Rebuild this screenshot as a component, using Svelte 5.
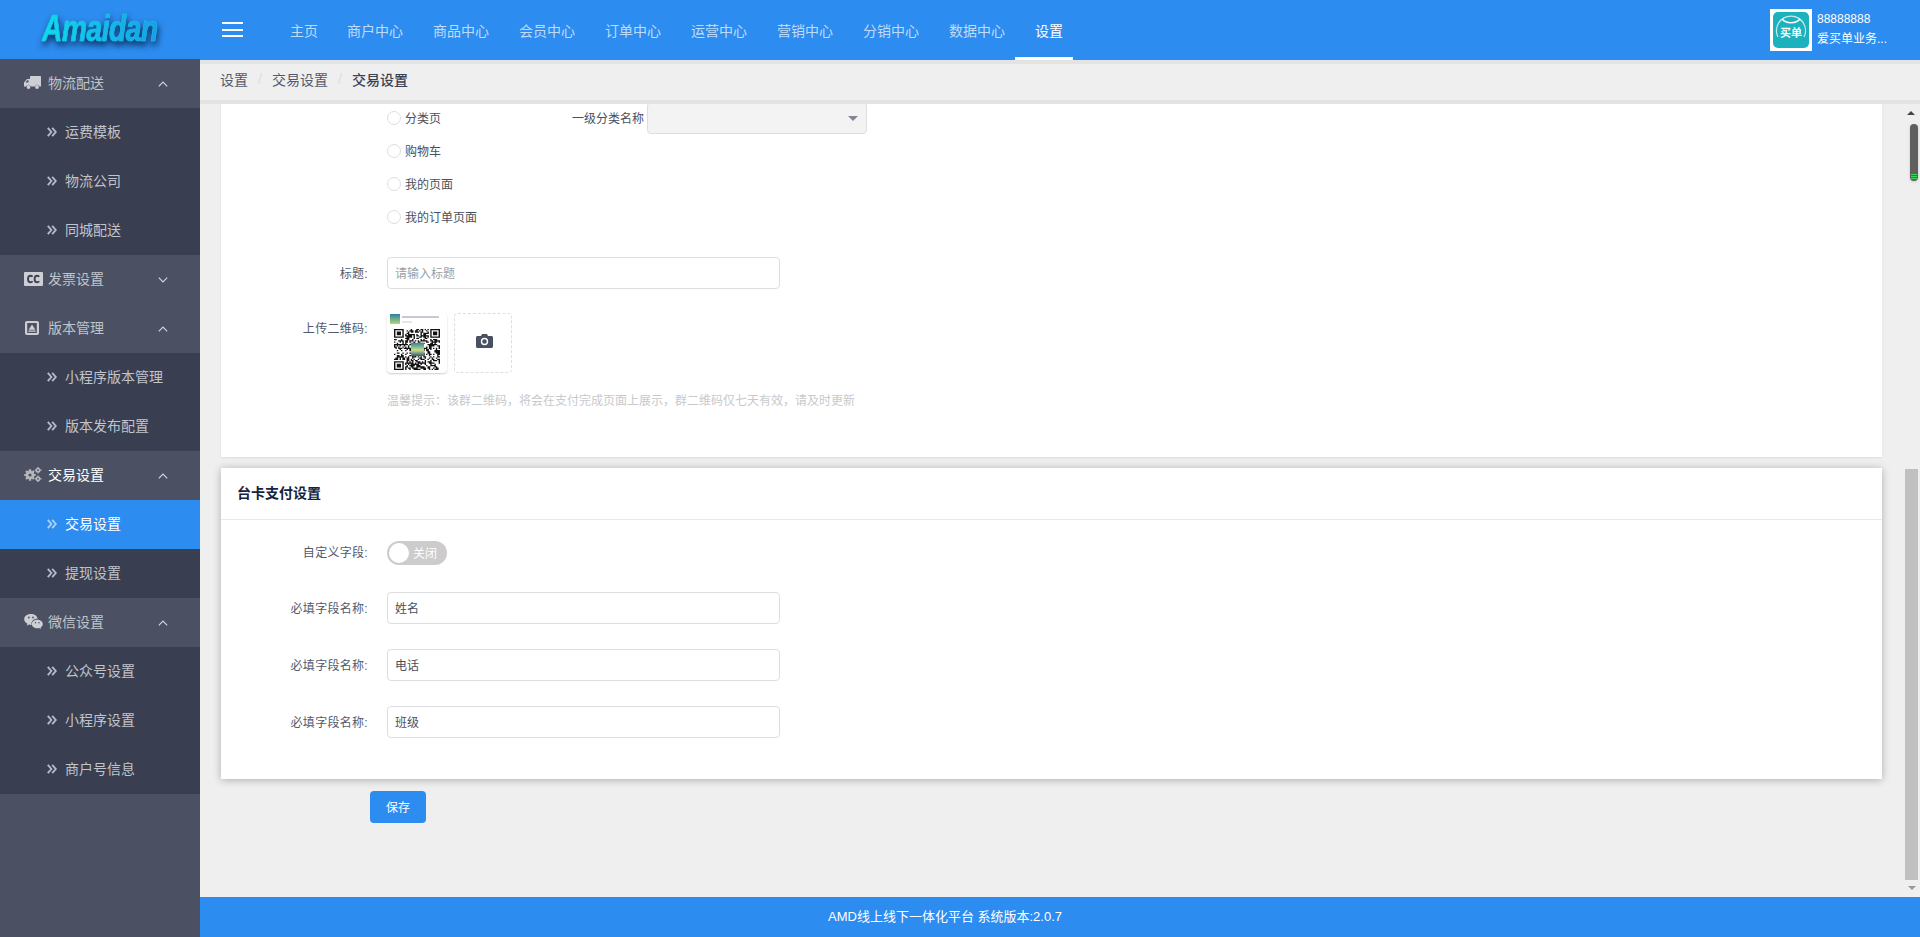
<script>
  const nav = ['主页', '商户中心', '商品中心', '会员中心', '订单中心', '运营中心', '营销中心', '分销中心', '数据中心', '设置']

  const menu = [
    { icon: 'truck', label: '物流配送', open: true, subs: ['运费模板', '物流公司', '同城配送'] },
    { icon: 'cc', label: '发票设置', open: false, subs: [] },
    { icon: 'version', label: '版本管理', open: true, subs: ['小程序版本管理', '版本发布配置'] },
    { icon: 'gears', label: '交易设置', open: true, current: true, subs: ['交易设置', '提现设置'] },
    { icon: 'wechat', label: '微信设置', open: true, subs: ['公众号设置', '小程序设置', '商户号信息'] }
  ]

  const pages = ['分类页', '购物车', '我的页面', '我的订单页面']
  const required = ['姓名', '电话', '班级']
  // full-width punctuation, same as the original page
  const hint = '温馨提示\uFF1A该群二维码\uFF0C将会在支付完成页面上展示\uFF0C群二维码仅七天有效\uFF0C请及时更新'

  // fake qr modules, just needs to look like one
  function qrPath(size) {
    let seed = 20771
    let d = ''
    const finder = (x, y) => x < 8 && y < 8
    for (let y = 0; y < size; y++) {
      for (let x = 0; x < size; x++) {
        seed = (seed * 1103515245 + 12345) & 0x7fffffff
        const inCorner = finder(x, y) || finder(size - 1 - x, y) || finder(x, size - 1 - y)
        if (!inCorner && (seed >> 16) % 2 === 0) d += `M${x} ${y}h1v1h-1z`
      }
    }
    for (const [cx, cy] of [[0, 0], [size - 7, 0], [0, size - 7]]) {
      d += `M${cx} ${cy}h7v7h-7zM${cx + 1} ${cy + 1}v5h5v-5zM${cx + 2} ${cy + 2}h3v3h-3z`
    }
    return d
  }
  const qr = qrPath(33)
</script>

<div class="page">
  <header class="top">
    <div class="logo"><span>Amaidan</span></div>
    <button class="burger" aria-label="menu"><i></i><i></i><i></i></button>
    <nav class="nav">
      {#each nav as item}
        <a class="nav-item" class:on={item === '设置'}>{item}</a>
      {/each}
    </nav>
    <div class="user">
      <div class="avatar">
        <div class="avatar-in">
          <svg viewBox="0 0 36 36" class="avatar-arc">
            <path d="M5 25a14.500 14.500 0 1 1 26 0" fill="none" stroke="#fff" stroke-opacity=".75" stroke-width="1.2" />
            <path d="M9 7c4 5 14 5 18 0" fill="none" stroke="#fff" stroke-width="1.4" />
          </svg>
          <span>买单</span>
        </div>
      </div>
      <div class="user-text">
        <div>88888888</div>
        <div>爱买单业务...</div>
      </div>
    </div>
  </header>

  <div class="body">
    <aside class="side">
      {#each menu as group}
        <div class="group" class:current={group.current}>
          <span class="g-icon">
            {#if group.icon === 'truck'}
              <svg width="17" height="13" viewBox="0 0 17 13"><path fill="currentColor" fill-rule="evenodd" d="M6 1c0-.6.4-1 1-1h9c.6 0 1 .4 1 1v9.500h-1.600a2.400 2.400 0 0 0-4.600 0H6.800a2.400 2.400 0 0 0-4.600 0H0V6.500L3 3h3zM1.500 6.500H4.500V4.300H3.200z" /><circle cx="4.500" cy="11" r="1.900" fill="currentColor" /><circle cx="13" cy="11" r="1.900" fill="currentColor" /></svg>
            {:else if group.icon === 'cc'}
              <svg width="19" height="14" viewBox="0 0 19 14"><rect width="19" height="14" rx="1" fill="currentColor" /><path d="M8.600 4.800C8 4 7.300 3.700 6.500 3.700c-1.500 0-2.500 1.300-2.500 3.300s1 3.300 2.500 3.300c.8 0 1.500-.3 2.100-1.100M15.200 4.800c-.6-.8-1.300-1.100-2.100-1.100-1.500 0-2.500 1.300-2.500 3.300s1 3.300 2.500 3.300c.8 0 1.500-.3 2.100-1.100" fill="none" stroke="#3f4454" stroke-width="1.900" /></svg>
            {:else if group.icon === 'version'}
              <svg class="shift" width="14" height="14" viewBox="0 0 14 14"><path fill="currentColor" fill-rule="evenodd" d="M2 0h10c1.100 0 2 .9 2 2v10c0 1.100-.9 2-2 2H2c-1.100 0-2-.9-2-2V2C0 .9.900 0 2 0zM2.200 2v10h9.600V2z" /><path fill="currentColor" d="M7 3.400 10.400 8.800H3.600zM3.400 9.600h7.200v1.100H3.400z" /></svg>
            {:else if group.icon === 'gears'}
              <svg width="18" height="15" viewBox="0 0 18 15"><g fill="none" stroke="#b5b6ba"><circle cx="6" cy="8" r="3" stroke-width="2.800" /><path d="M6 2.300v2M6 11.700v2M.3 8h2M9.700 8h2M2 4l1.400 1.400M8.600 10.600 10 12M2 12l1.400-1.400M8.600 5.400 10 4" stroke-width="2.200" /><circle cx="14" cy="3.200" r="1.700" stroke-width="1.600" /><path d="M14 0v1M14 5.400v1M10.800 3.200h1M16.200 3.200h1.200" stroke-width="1.400" /><circle cx="14" cy="11.800" r="1.700" stroke-width="1.600" /><path d="M14 8.600v1M14 14v1M10.800 11.800h1M16.200 11.800h1.200" stroke-width="1.400" /></g></svg>
            {:else}
              <svg width="19" height="15" viewBox="0 0 19 15"><path fill="currentColor" d="M7 0c3.500 0 6.200 2 6.600 4.700-3.300-.2-6.200 2-6.200 4.900 0 .5.100.9.200 1.300H7c-.7 0-1.300-.1-1.900-.3l-2.300 1.200.6-2C1.400 8.600.2 6.900.2 5 .2 2.200 3.200 0 7 0z" /><path fill="currentColor" d="M13.300 5.700c3 0 5.500 1.900 5.500 4.200 0 1.400-.9 2.500-2.200 3.400l.5 1.700-1.900-1c-.6.200-1.300.3-1.900.3-3 0-5.500-1.900-5.500-4.300s2.500-4.300 5.500-4.300z" /><g fill="#4b5162"><circle cx="4.800" cy="3.500" r=".9" /><circle cx="9" cy="3.500" r=".9" /><circle cx="11.500" cy="8.700" r=".7" /><circle cx="15" cy="8.700" r=".7" /></g></svg>
            {/if}
          </span>
          <span class="g-label">{group.label}</span>
          <svg class="chev" width="10" height="6" viewBox="0 0 10 6">
            <path d={group.open ? 'M.8 5.300 5 1l4.200 4.300' : 'M.8.700 5 5l4.200-4.300'} fill="none" stroke="currentColor" stroke-width="1.100" />
          </svg>
        </div>
        {#each group.subs as sub}
          <div class="sub" class:active={group.current && sub === '交易设置'}>
            <svg class="dbl" width="10" height="10" viewBox="0 0 10 10"><path d="M.8.800 4.400 5 .8 9.200M5.200.8 8.800 5 5.200 9.200" fill="none" stroke="currentColor" stroke-width="1.900" /></svg>
            <span>{sub}</span>
          </div>
        {/each}
      {/each}
    </aside>

    <main class="main">
      <div class="crumbs">
        <span>设置</span><em>/</em><span>交易设置</span><em>/</em><b>交易设置</b>
      </div>

      <div class="content">
        <section class="card card-plain">
          <div class="radio-list">
            {#each pages as p, i}
              <div class="radio-row">
                <span class="radio"></span>
                <span class="radio-text">{p}</span>
                {#if i === 0}
                  <span class="sel-label">一级分类名称</span>
                  <span class="select"><i class="caret"></i></span>
                {/if}
              </div>
            {/each}
          </div>

          <div class="row row-title">
            <label class="lab">标题:</label>
            <div class="input placeholder">请输入标题</div>
          </div>

          <div class="row row-upload">
            <label class="lab">上传二维码:</label>
            <div class="thumb">
              <div class="thumb-head">
                <span class="mini"></span>
                <span class="mini-lines"><i></i><i></i></span>
              </div>
              <div class="qr-wrap">
                <svg class="qr" viewBox="0 0 33 33" preserveAspectRatio="none"><path fill="#111" fill-rule="evenodd" d={qr} /></svg>
                <span class="qr-logo"></span>
              </div>
            </div>
            <div class="upload">
              <svg width="17" height="14" viewBox="0 0 17 14"><path fill="#495060" fill-rule="evenodd" d="M1.500 2H5l1-2h5l1 2h3.500c.8 0 1.500.7 1.500 1.500v9c0 .8-.7 1.500-1.500 1.500h-14C.7 14 0 13.300 0 12.500v-9C0 2.700.7 2 1.500 2zM8.500 3.800a3.700 3.700 0 1 0 0 7.400 3.700 3.700 0 0 0 0-7.400zM8.500 5.200a2.300 2.300 0 1 1 0 4.600 2.300 2.300 0 0 1 0-4.600z" /></svg>
            </div>
          </div>

          <p class="hint">{hint}</p>
        </section>

        <section class="card card-raised">
          <h3 class="card-title">台卡支付设置</h3>
          <div class="card-body">
            <div class="row row-switch">
              <label class="lab">自定义字段:</label>
              <div class="switch"><i></i><span>关闭</span></div>
            </div>
            {#each required as val}
              <div class="row row-field">
                <label class="lab">必填字段名称:</label>
                <div class="input">{val}</div>
              </div>
            {/each}
          </div>
        </section>

        <button class="save">保存</button>
      </div>

      <footer class="foot">AMD线上线下一体化平台 系统版本:2.0.7</footer>
    </main>
  </div>

  <div class="bar-top">
    <i class="arrow-up"></i>
    <div class="thumb-dark"><i></i><i></i><i></i></div>
  </div>
  <div class="bar-main"></div>
  <i class="arrow-down"></i>
</div>

<style>
  :global(body) {
    margin: 0;
    font-family: "Liberation Sans", "Noto Sans CJK SC", sans-serif;
  }
  .page {
    position: relative;
    width: 1920px;
    height: 937px;
    overflow: hidden;
    background: #efefef;
    font-size: 12px;
    color: #495060;
  }

  .top {
    display: flex;
    align-items: stretch;
    height: 60px;
    background: #2d8cf0;
  }
  .logo {
    width: 222px;
    flex: none;
    display: flex;
    padding: 8px 0 0 42px;
    box-sizing: border-box;
    filter: drop-shadow(1px 4px 3px rgba(5, 40, 80, .95));
  }
  .logo span {
    display: block;
    height: 42px;
    font: italic bold 36px/42px "Liberation Sans", sans-serif;
    letter-spacing: -.5px;
    background: linear-gradient(90deg, #10dcea, #1a9ee8);
    -webkit-background-clip: text;
    background-clip: text;
    color: transparent;
    -webkit-text-stroke: .7px #16bcea;
    transform: scaleX(.78);
    transform-origin: left center;
  }
  .burger {
    flex: none;
    width: 21px;
    height: 15px;
    margin-top: 22px;
    padding: 0;
    border: 0;
    background: none;
    display: flex;
    flex-direction: column;
    justify-content: space-between;
  }
  .burger i {
    display: block;
    height: 2px;
    background: #fff;
  }
  .nav {
    display: flex;
    margin-left: 32px;
    flex: 1;
  }
  .nav-item {
    position: relative;
    padding: 0 15px;
    line-height: 63px;
    font-size: 14px;
    color: rgba(255, 255, 255, .7);
  }
  .nav-item:first-child {
    padding-right: 14px;
  }
  .nav-item.on {
    color: #fff;
  }
  .nav-item.on::after {
    content: '';
    position: absolute;
    left: -5px;
    right: 5px;
    bottom: 0;
    height: 3px;
    background: #fff;
  }
  .user {
    display: flex;
    width: 150px;
    flex: none;
    padding-top: 9px;
    box-sizing: border-box;
    color: #fff;
  }
  .avatar {
    width: 42px;
    height: 42px;
    background: #fff;
    padding: 3px;
    box-sizing: border-box;
  }
  .avatar-in {
    position: relative;
    height: 36px;
    border-radius: 5px;
    background: #1bb1bd;
    display: flex;
    align-items: center;
    justify-content: center;
  }
  .avatar-arc {
    position: absolute;
    inset: 0;
  }
  .avatar-in span {
    position: relative;
    margin-top: 6px;
    font-size: 11px;
    font-weight: 700;
    line-height: 12px;
    color: #fff;
  }
  .user-text {
    margin-left: 5px;
    line-height: 20px;
    white-space: nowrap;
    font-size: 12px;
  }

  .body {
    display: flex;
    height: 877px;
  }
  .side {
    position: relative;
    width: 200px;
    flex: none;
    margin-top: -1px;
    background: #4b5162;
    color: #c0c4cc;
    font-size: 14px;
  }
  .group,
  .sub {
    display: flex;
    align-items: center;
    height: 49px;
    padding-bottom: 2px;
    box-sizing: border-box;
  }
  .group {
    padding-left: 24px;
    background: #4b5162;
  }
  .group.current {
    color: #fff;
  }
  .g-icon {
    width: 24px;
    flex: none;
    display: flex;
    color: #cdcfd4;
  }
  .g-icon .shift {
    margin-left: 1px;
  }
  .g-label {
    flex: 1;
    margin-bottom: 2px;
  }
  .chev {
    margin: 2px 32px 0 0;
    color: #d5d7dc;
  }
  .sub {
    padding-left: 47px;
    background: #393e50;
  }
  .sub span {
    margin: 0 0 2px 8px;
  }
  .dbl {
    color: #b4bbc8;
  }
  .sub.active {
    background: #2d8cf0;
    color: #fff;
  }
  .sub.active .dbl {
    color: #a9d1f8;
  }

  .main {
    flex: 1;
    min-width: 0;
    display: flex;
    flex-direction: column;
  }
  .crumbs {
    height: 44px;
    flex: none;
    border-top: 4px solid #e3e3e3;
    border-bottom: 4px solid #e3e3e3;
    background: #efefef;
    display: flex;
    align-items: center;
    box-sizing: border-box;
    padding: 0 0 7px 20px;
    font-size: 14px;
    color: #515a6e;
  }
  .crumbs em {
    font-style: normal;
    margin: 0 9px 0 9px;
    width: 6px;
    text-align: center;
    color: #dcdee2;
  }
  .crumbs b {
    font-weight: 500;
    color: #3a4254;
  }
  .content {
    flex: 1;
    min-height: 0;
    overflow: hidden;
    padding: 0 38px 0 21px;
  }
  .foot {
    height: 40px;
    flex: none;
    background: #2d8cf0;
    color: #fff;
    line-height: 40px;
    font-size: 13px;
    padding-left: 628px;
  }

  .card {
    background: #fff;
  }
  .card-plain {
    margin-top: -3px;
    padding: 0 0 47px;
    box-shadow: 0 1px 2px rgba(0, 0, 0, .08);
  }
  .card-raised {
    margin-top: 11px;
    box-shadow: 0 1px 8px rgba(0, 0, 0, .28);
  }
  .card-title {
    margin: 0;
    height: 52px;
    line-height: 50px;
    padding-left: 16px;
    font-size: 14px;
    font-weight: 700;
    color: #17233d;
    border-bottom: 1px solid #e8eaec;
    box-sizing: border-box;
  }
  .card-body {
    padding: 21px 0 41px;
  }

  .radio-row {
    display: flex;
    align-items: center;
    height: 33px;
    padding-left: 166px;
  }
  .radio {
    width: 14px;
    height: 14px;
    border: 1px solid #dcdee2;
    border-radius: 50%;
    box-sizing: border-box;
    background: #fff;
  }
  .radio-text {
    margin-left: 4px;
    width: 167px;
  }
  .sel-label {
    width: 75px;
  }
  .select {
    position: relative;
    width: 220px;
    height: 32px;
    border: 1px solid #dcdee2;
    border-radius: 4px;
    background: #f3f3f3;
    box-sizing: border-box;
  }
  .caret {
    position: absolute;
    right: 8px;
    top: 13px;
    border: 5px solid transparent;
    border-top: 5px solid #808695;
    border-bottom: 0;
  }

  .row {
    display: flex;
    align-items: center;
  }
  .row-title {
    margin-top: 24px;
  }
  .row-upload {
    margin-top: 24px;
    align-items: flex-start;
  }
  .row-upload .lab {
    line-height: 32px;
    padding-bottom: 0;
  }
  .row-field {
    margin-top: 25px;
  }
  .row-field:nth-child(2) {
    margin-top: 27px;
  }
  .lab {
    width: 147px;
    flex: none;
    margin-right: 19px;
    padding-bottom: 2px;
    text-align: right;
    letter-spacing: .3px;
    color: #515a6e;
  }
  .row-switch .lab {
    padding-bottom: 4px;
  }
  .input {
    width: 393px;
    height: 32px;
    line-height: 32px;
    border: 1px solid #dcdee2;
    border-radius: 4px;
    box-sizing: border-box;
    padding-left: 7px;
    background: #fff;
  }
  .placeholder {
    color: #9a9fa8;
  }
  .thumb {
    width: 60px;
    height: 60px;
    border-radius: 4px;
    background: #fff;
    box-shadow: 0 1px 2px rgba(0, 0, 0, .2);
    box-sizing: border-box;
    padding: 1px 3px 0;
  }
  .thumb-head {
    display: flex;
    gap: 2px;
    height: 15px;
  }
  .mini {
    width: 10px;
    height: 10px;
    background: linear-gradient(#2c7f9c, #b7d77a);
  }
  .mini-lines {
    display: flex;
    flex-direction: column;
    gap: 3px;
    padding-top: 2px;
  }
  .mini-lines i {
    display: block;
    width: 37px;
    height: 2px;
    background: #c6cad2;
  }
  .mini-lines i + i {
    width: 10px;
    background: #e3e5e9;
  }
  .qr-wrap {
    position: relative;
    width: 46px;
    height: 41px;
    margin: 0 auto;
    display: flex;
    align-items: center;
    justify-content: center;
  }
  .qr {
    width: 46px;
    height: 41px;
  }
  .qr-logo {
    position: absolute;
    width: 13px;
    height: 13px;
    background: linear-gradient(#2c8c9c, #c8dd84 55%, #2f5f80);
  }
  .upload {
    width: 58px;
    height: 60px;
    margin-left: 7px;
    border: 1px dashed #dcdee2;
    border-radius: 4px;
    box-sizing: border-box;
    display: flex;
    align-items: center;
    justify-content: center;
    padding: 0 0 5px 3px;
  }
  .hint {
    margin: 19px 0 0 166px;
    line-height: 18px;
    color: #c8c9cc;
  }
  .switch {
    display: flex;
    align-items: center;
    width: 60px;
    height: 24px;
    border-radius: 12px;
    background: #ccc;
    box-sizing: border-box;
    padding-left: 2px;
    color: #fff;
  }
  .switch i {
    width: 20px;
    height: 20px;
    border-radius: 50%;
    background: #fff;
  }
  .switch span {
    margin: 0 0 2px 4px;
  }
  .save {
    display: block;
    width: 56px;
    height: 32px;
    margin: 12px 0 0 149px;
    padding: 0 0 2px;
    border: 0;
    border-radius: 4px;
    background: #2d8cf0;
    color: #fff;
    font: inherit;
  }

  .bar-top {
    position: absolute;
    left: 1907px;
    top: 111px;
    width: 11px;
  }
  .arrow-up {
    display: block;
    width: 0;
    margin-left: 0;
    border: 4px solid transparent;
    border-bottom: 4px solid #444;
    border-top: 0;
  }
  .thumb-dark {
    position: absolute;
    left: 3px;
    top: 13px;
    width: 8px;
    height: 57px;
    border-radius: 4px;
    background: #5f5f5f;
    box-sizing: border-box;
    padding-top: 50px;
    box-shadow: 0 1px 3px rgba(0, 0, 0, .15);
  }
  .thumb-dark i {
    display: block;
    height: 1px;
    margin-bottom: 1px;
    background: #3fd45a;
    margin-inline: 1px;
  }
  .bar-main {
    position: absolute;
    left: 1905px;
    top: 469px;
    width: 13px;
    height: 411px;
    background: #c0c0c0;
  }
  .arrow-down {
    position: absolute;
    left: 1908px;
    top: 886px;
    border: 4px solid transparent;
    border-top: 4px solid #999;
    border-bottom: 0;
  }
</style>
